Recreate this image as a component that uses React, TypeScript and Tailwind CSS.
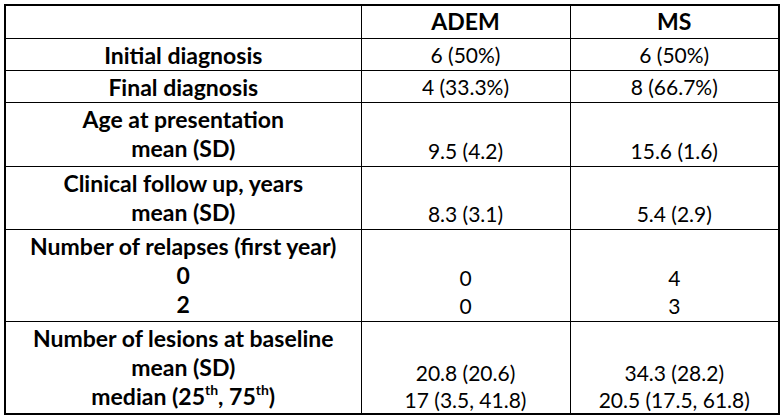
import React from "react"

const font = { fontFamily: "Lato, 'Open Sans', sans-serif" }

function Sup({ children }: { children: React.ReactNode }) {
  return <sup className="text-[14px] -top-[10px]">{children}</sup>
}

export default function App() {
  const label = "border border-black text-center align-top font-bold text-[23px] leading-[29px] px-1 pt-[2px]"
  const cell = "border border-black text-center align-bottom text-[21px] leading-[28px] pb-[1px]"
  const head = "border border-black text-center align-middle font-bold text-[23px] leading-[29px]"

  return (
    <div className="w-[784px] h-[417px] bg-white text-black pt-1 pl-1" style={font}>
      <table className="table-fixed border-collapse border-2 border-black w-[774px]">
        <colgroup>
          <col className="w-[356px]" />
          <col className="w-[209px]" />
          <col className="w-[209px]" />
        </colgroup>
        <tbody>
          <tr className="h-[33px]">
            <td className={label}></td>
            <td className={head}>ADEM</td>
            <td className={head}>MS</td>
          </tr>
          <tr className="h-[32px]">
            <td className={label}>Initial diagnosis</td>
            <td className={cell}>6 (50%)</td>
            <td className={cell}>6 (50%)</td>
          </tr>
          <tr className="h-[32px]">
            <td className={label}>Final diagnosis</td>
            <td className={cell}>4 (33.3%)</td>
            <td className={cell}>8 (66.7%)</td>
          </tr>
          <tr className="h-[64px]">
            <td className={label}>
              Age at presentation
              <br />
              mean (SD)
            </td>
            <td className={cell}>9.5 (4.2)</td>
            <td className={cell}>15.6 (1.6)</td>
          </tr>
          <tr className="h-[63px]">
            <td className={label}>
              Clinical follow up, years
              <br />
              mean (SD)
            </td>
            <td className={cell}>8.3 (3.1)</td>
            <td className={cell}>5.4 (2.9)</td>
          </tr>
          <tr className="h-[92px]">
            <td className={label}>
              Number of relapses (first year)
              <br />
              0
              <br />2
            </td>
            <td className={cell}>
              0
              <br />0
            </td>
            <td className={cell}>
              4
              <br />3
            </td>
          </tr>
          <tr className="h-[93px]">
            <td className={label}>
              Number of lesions at baseline
              <br />
              mean (SD)
              <br />
              median (25<Sup>th</Sup>, 75<Sup>th</Sup>)
            </td>
            <td className="border border-black text-center align-bottom text-[21px] leading-[27px]">
              20.8 (20.6)
              <br />
              17 (3.5, 41.8)
            </td>
            <td className="border border-black text-center align-bottom text-[21px] leading-[27px]">
              34.3 (28.2)
              <br />
              20.5 (17.5, 61.8)
            </td>
          </tr>
        </tbody>
      </table>
    </div>
  )
}
